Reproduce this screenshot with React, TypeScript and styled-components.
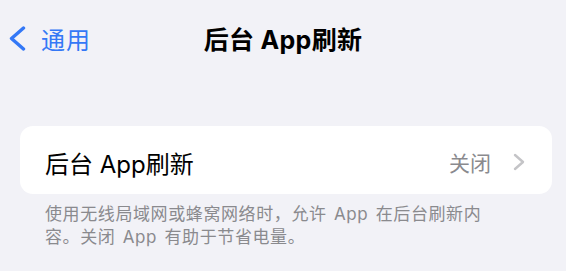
import React from "react";
import styled, { createGlobalStyle } from "styled-components";

const GlobalStyle = createGlobalStyle`
  html, body {
    margin: 0;
    padding: 0;
    background: #f2f2f7;
  }
  body {
    font-family: "Inter", "Noto Sans CJK SC", "Noto Sans", sans-serif;
    -webkit-font-smoothing: antialiased;
  }
`;

const Page = styled.div`
  width: 566px;
  height: 271px;
  background: #f2f2f7;
  overflow: hidden;
`;

const NavBar = styled.div`
  display: grid;
  grid-template-columns: 1fr auto 1fr;
  align-items: center;
  height: 76px;
`;

const BackButton = styled.div`
  display: flex;
  align-items: center;
  gap: 15px;
  padding-left: 9px;
  color: #3478f6;
  font-size: 24px;
  letter-spacing: 1px;
`;

const Title = styled.div`
  font-size: 25px;
  font-weight: 700;
  color: #000;
  letter-spacing: 0.3px;
`;

const Card = styled.div`
  margin: 50px 14px 0 20px;
  height: 68px;
  background: #fff;
  border-radius: 13px;
  display: flex;
  align-items: center;
  justify-content: space-between;
  padding: 0 27px 0 25px;
  box-sizing: border-box;
`;

const Label = styled.div`
  font-size: 24px;
  color: #000;
  padding-top: 4px;
`;

const Value = styled.div`
  display: flex;
  align-items: center;
  gap: 22px;
  font-size: 21px;
  color: #8a8a8e;
  padding-top: 4px;
`;

const Footer = styled.div`
  margin-top: 9px;
  padding: 0 56px 0 45px;
  font-size: 17px;
  line-height: 23px;
  color: #8a8a8e;
  letter-spacing: 0.6px;
  word-spacing: 2px;
`;

export default function App() {
  return (
    <Page>
      <GlobalStyle />
      <NavBar>
        <BackButton>
          <svg width="17" height="25" viewBox="0 0 17 25">
            <polyline
              points="14.5,2 2.5,12.5 14.5,23"
              fill="none"
              stroke="#3478f6"
              strokeWidth="3.4"
              strokeLinecap="round"
              strokeLinejoin="round"
            />
          </svg>
          <span>通用</span>
        </BackButton>
        <Title>后台 App刷新</Title>
        <div />
      </NavBar>
      <Card>
        <Label>后台 App刷新</Label>
        <Value>
          <span>关闭</span>
          <svg width="12" height="18" viewBox="0 0 12 18">
            <polyline
              points="2,2 10,9 2,16"
              fill="none"
              stroke="#c4c4c7"
              strokeWidth="2.4"
              strokeLinecap="round"
              strokeLinejoin="round"
            />
          </svg>
        </Value>
      </Card>
      <Footer>
        使用无线局域网或蜂窝网络时，允许 App 在后台刷新内容。关闭 App 有助于节省电量。
      </Footer>
    </Page>
  );
}
